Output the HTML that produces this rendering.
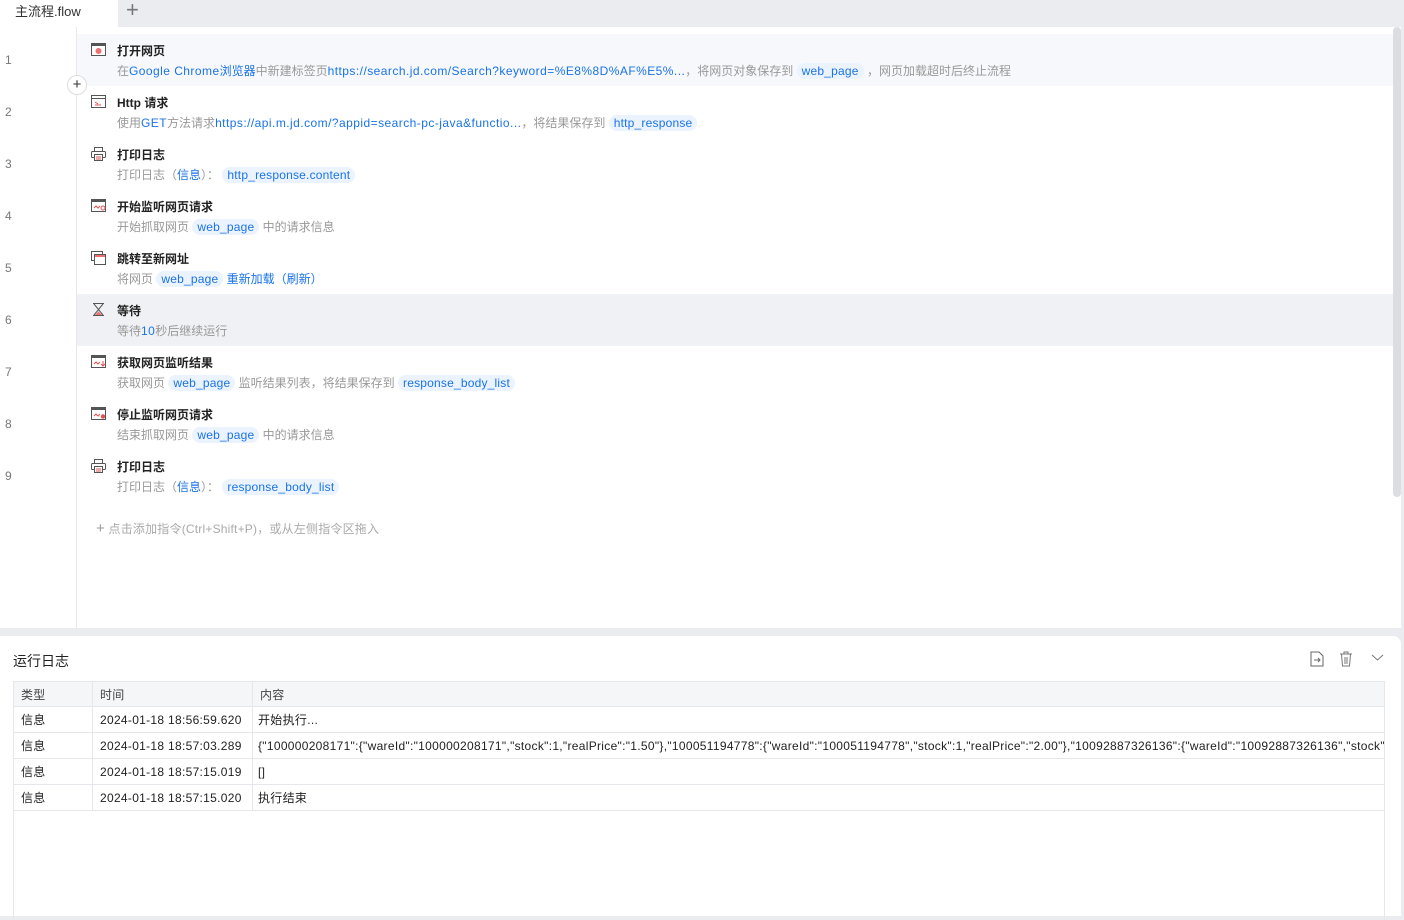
<!DOCTYPE html>
<html><head><meta charset="utf-8"><style>
*{margin:0;padding:0;box-sizing:border-box}
body{width:1404px;height:916px;overflow:hidden;background:#ebecf0;font-family:"Liberation Sans","Noto Sans CJK SC",sans-serif;position:relative;color:#222}
.tab{position:absolute;left:0;top:0;width:118px;height:27px;background:#fff;font-size:13px;padding:1px 0 0 15px;color:#333}
.plus{position:absolute;left:126px;top:-1px;font-size:22px;color:#777;line-height:22px}
.editor{position:absolute;left:0;top:27px;width:1401px;height:601px;background:#fff}
.gutter{position:absolute;left:76px;top:0;width:1px;height:601px;background:#e8e9ec}
.ln{position:absolute;left:5px;font-size:12px;color:#777}
.row{position:absolute;left:77px;width:1316px;height:52px}
.row svg{position:absolute;left:14px;top:9px}
.t{position:absolute;left:40px;top:8px;font-size:12px;font-weight:bold;color:#222}
.d{position:absolute;left:40px;top:28px;font-size:12px;color:#999;white-space:nowrap}
.b{color:#1a73e8}
.u{letter-spacing:0.45px}
.c{background:#ebf3fe;color:#1a73e8;border-radius:9px;padding:1px 5px;letter-spacing:0.2px}
.sb{position:absolute;left:1393px;top:0;width:8px;height:470px;background:#dcdde1;border-radius:4px}
.addc{position:absolute;left:67px;top:48px;width:20px;height:20px;border:1px solid #ddd;border-radius:50%;background:#fff;font-size:15px;line-height:17px;text-align:center;color:#333}
.hint{position:absolute;left:96px;top:493px;font-size:12px;color:#aaa;letter-spacing:0.2px}
.panel{position:absolute;left:0;top:636px;width:1401px;height:280px;background:#fff;border-top-right-radius:8px}
.ptitle{position:absolute;left:13px;top:15px;font-size:14px;color:#222}
table{position:absolute;left:13px;top:45px;width:1372px;border-collapse:collapse;font-size:12px;table-layout:fixed}
td{height:26px;border:1px solid #e6e7ea;padding:0 0 0 7px;white-space:nowrap;overflow:hidden;color:#222;letter-spacing:0.3px}
tr.h td{background:#f5f6f8;height:25px;color:#444}
.tb{position:absolute;left:13px;top:174px;width:1372px;height:110px;border-left:1px solid #e6e7ea;border-right:1px solid #e6e7ea}
</style></head><body>
<div class="tab">主流程.flow</div><div class="plus">+</div>
<div class="editor">
<div class="gutter"></div>
<div class="ln" style="top:26px">1</div><div class="ln" style="top:78px">2</div><div class="ln" style="top:130px">3</div><div class="ln" style="top:182px">4</div><div class="ln" style="top:234px">5</div><div class="ln" style="top:286px">6</div><div class="ln" style="top:338px">7</div><div class="ln" style="top:390px">8</div><div class="ln" style="top:442px">9</div>

<div class="row" style="top:7px;background:#f6f8fc"><svg width="15" height="13"><rect x=".5" y=".5" width="14" height="12" fill="#fff" stroke="#555"/><rect x="1" y="1" width="13" height="2" fill="#555"/><circle cx="7.5" cy="8" r="3" fill="#f07070"/></svg><div class="t">打开网页</div><div class="d">在<span class="b"><span class="u">Google Chrome</span>浏览器</span>中新建标签页<span class="b u">https://search.jd.com/Search?keyword=%E8%8D%AF%E5%...</span>，将网页对象保存到 <span class="c">web_page</span> ，网页加载超时后终止流程</div></div>
<div class="row" style="top:59px"><svg width="15" height="13"><rect x=".5" y=".5" width="14" height="12" fill="#fff" stroke="#555"/><line x1="1" y1="3.5" x2="14" y2="3.5" stroke="#555"/><path d="M4 7l3 2M4 10h6" stroke="#e05050" fill="none"/></svg><div class="t">Http 请求</div><div class="d">使用<span class="b u">GET</span>方法请求<span class="b u">https://api.m.jd.com/?appid=search-pc-java&amp;functio...</span>，将结果保存到 <span class="c">http_response</span></div></div>
<div class="row" style="top:111px"><svg width="15" height="14"><rect x="3.5" y=".5" width="8" height="4" fill="none" stroke="#555"/><rect x=".5" y="4.5" width="14" height="6" rx="1" fill="none" stroke="#555"/><rect x="3.5" y="7.5" width="8" height="6" fill="#fff" stroke="#555"/><path d="M5 10h5M5 12h5" stroke="#e05050"/></svg><div class="t">打印日志</div><div class="d">打印日志（<span class="b">信息</span>）： <span class="c">http_response.content</span></div></div>
<div class="row" style="top:163px"><svg width="15" height="13"><rect x=".5" y=".5" width="14" height="12" fill="#fff" stroke="#555"/><rect x="1" y="1" width="13" height="2" fill="#555"/><path d="M3 9l2-2 2 2 2-2" stroke="#e05050" fill="none"/><circle cx="12" cy="9" r="2" fill="none" stroke="#e05050"/></svg><div class="t">开始监听网页请求</div><div class="d">开始抓取网页 <span class="c">web_page</span> 中的请求信息</div></div>
<div class="row" style="top:215px"><svg width="15" height="14"><rect x=".5" y=".5" width="11" height="9" fill="none" stroke="#555"/><rect x="3.5" y="3.5" width="11" height="10" fill="#fff" stroke="#555"/><rect x="4" y="4" width="10" height="2" fill="#f07070"/></svg><div class="t">跳转至新网址</div><div class="d">将网页 <span class="c">web_page</span> <span class="b">重新加载（刷新）</span></div></div>
<div class="row" style="top:267px;background:#f0f1f5"><svg width="15" height="13"><path d="M2 .5h11M2 12.5h11M3 1l4.5 5.5L12 1M3 12l4.5-5.5L12 12" stroke="#555" fill="none"/><path d="M4 12l3.5-3.5L11 12z" fill="#f07070"/></svg><div class="t">等待</div><div class="d">等待<span class="b u">10</span>秒后继续运行</div></div>
<div class="row" style="top:319px"><svg width="15" height="13"><rect x=".5" y=".5" width="14" height="12" fill="#fff" stroke="#555"/><rect x="1" y="1" width="13" height="2" fill="#555"/><path d="M3 9l2-2 2 2 2-2" stroke="#e05050" fill="none"/><path d="M12 6v5M10 9l2 2 2-2" stroke="#e05050" fill="none"/></svg><div class="t">获取网页监听结果</div><div class="d">获取网页 <span class="c">web_page</span> 监听结果列表，将结果保存到 <span class="c">response_body_list</span></div></div>
<div class="row" style="top:371px"><svg width="15" height="13"><rect x=".5" y=".5" width="14" height="12" fill="#fff" stroke="#555"/><rect x="1" y="1" width="13" height="2" fill="#555"/><path d="M3 9l2-2 2 2 2-2" stroke="#e05050" fill="none"/><circle cx="12" cy="9.5" r="2.2" fill="#e05050"/></svg><div class="t">停止监听网页请求</div><div class="d">结束抓取网页 <span class="c">web_page</span> 中的请求信息</div></div>
<div class="row" style="top:423px"><svg width="15" height="14"><rect x="3.5" y=".5" width="8" height="4" fill="none" stroke="#555"/><rect x=".5" y="4.5" width="14" height="6" rx="1" fill="none" stroke="#555"/><rect x="3.5" y="7.5" width="8" height="6" fill="#fff" stroke="#555"/><path d="M5 10h5M5 12h5" stroke="#e05050"/></svg><div class="t">打印日志</div><div class="d">打印日志（<span class="b">信息</span>）： <span class="c">response_body_list</span></div></div>
<div class="addc">+</div>
<div class="hint"><span style="font-size:15px;color:#999">+</span> 点击添加指令(Ctrl+Shift+P)，或从左侧指令区拖入</div>
<div class="sb"></div>
</div>
<div class="panel">
<div class="ptitle">运行日志</div>
<svg style="position:absolute;left:1310px;top:15px" width="14" height="16"><path d="M1 1h8l4 4v10H1z" fill="none" stroke="#666"/><path d="M4 9h6M8 7l2 2-2 2" stroke="#666" fill="none"/></svg>
<svg style="position:absolute;left:1339px;top:15px" width="14" height="16"><path d="M1 3h12M5 3V1h4v2M2.5 3l1 12h7l1-12M6 6v7M8 6v7" stroke="#777" fill="none"/></svg>
<svg style="position:absolute;left:1371px;top:18px" width="13" height="8"><path d="M1 1l5.5 5L12 1" stroke="#777" fill="none"/></svg>
<table>
<colgroup><col style="width:79px"><col style="width:160px"><col></colgroup>
<tr class="h"><td>类型</td><td>时间</td><td>内容</td></tr>
<tr><td>信息</td><td>2024-01-18 18:56:59.620</td><td style="padding-left:5px">开始执行...</td></tr>
<tr><td>信息</td><td>2024-01-18 18:57:03.289</td><td style="padding-left:5px">{"100000208171":{"wareId":"100000208171","stock":1,"realPrice":"1.50"},"100051194778":{"wareId":"100051194778","stock":1,"realPrice":"2.00"},"10092887326136":{"wareId":"10092887326136","stock":1}}</td></tr>
<tr><td>信息</td><td>2024-01-18 18:57:15.019</td><td style="padding-left:5px">[]</td></tr>
<tr><td>信息</td><td>2024-01-18 18:57:15.020</td><td style="padding-left:5px">执行结束</td></tr>
</table>
<div class="tb"></div>
</div>
</body></html>
